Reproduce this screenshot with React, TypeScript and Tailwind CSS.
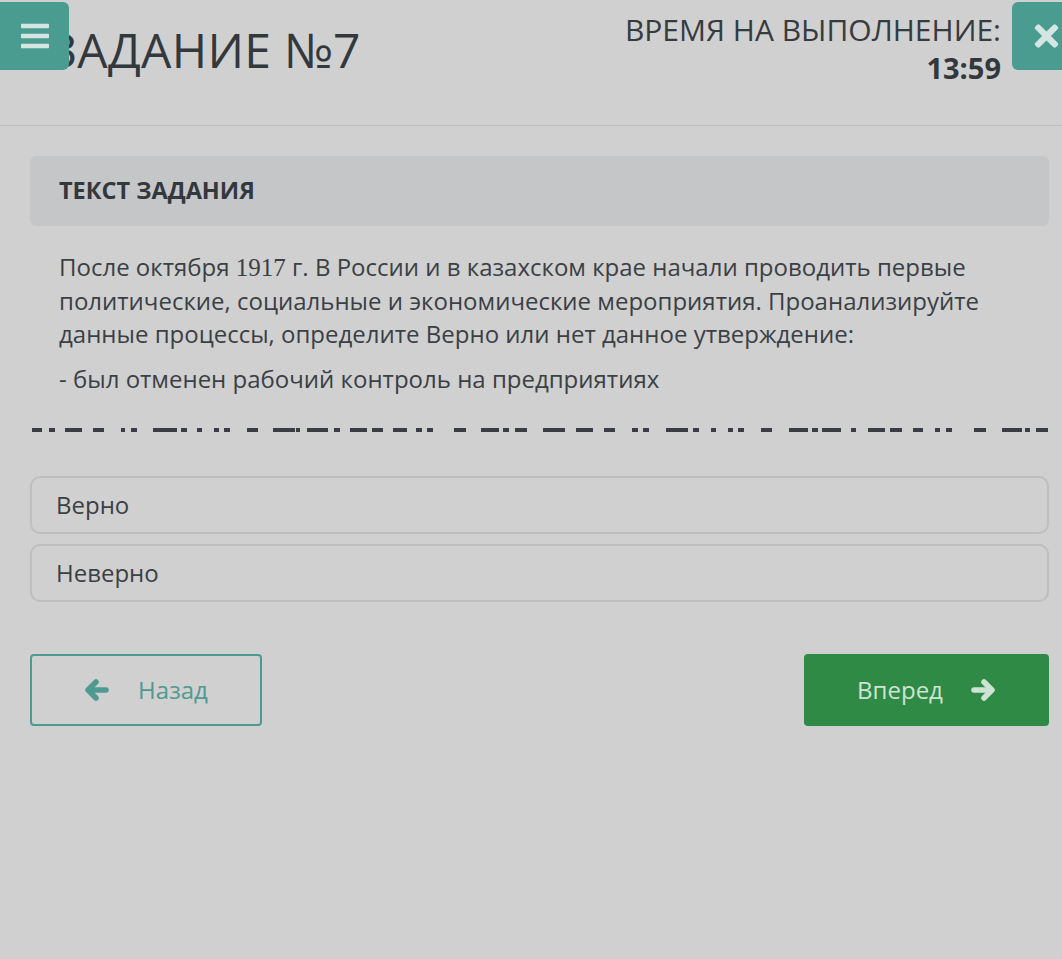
import { FaBars, FaTimes } from 'react-icons/fa'

// dashes under the question text, [x, width] in px relative to the line start (x=30)
const dashes: [number, number][] = [
  [2, 10], [19, 6], [35, 17], [63, 11], [91, 4], [101, 6], [123, 24], [151, 6], [167, 5], [184, 5],
  [194, 6], [217, 11], [243, 22], [266, 4], [277, 21], [304, 6], [320, 17], [342, 11], [363, 14],
  [386, 6], [397, 6], [424, 12], [451, 18], [473, 6], [485, 12], [513, 17], [529, 6], [546, 17],
  [574, 11], [602, 6], [613, 6], [636, 22], [663, 6], [681, 5], [698, 5], [708, 6], [731, 11],
  [759, 19], [782, 6], [792, 19], [821, 5], [838, 17], [860, 12], [883, 10], [905, 5], [916, 6],
  [944, 12], [972, 20], [995, 5], [1006, 12],
]

const options = ['Верно', 'Неверно']

function Arrow({ dir }: { dir: 'left' | 'right' }) {
  return (
    <svg
      width="26"
      height="24"
      viewBox="0 0 26 24"
      fill="none"
      stroke="currentColor"
      strokeWidth="5.5"
      strokeLinecap="round"
      strokeLinejoin="round"
      className={dir === 'right' ? 'rotate-180' : ''}
    >
      <path d="M12 4 L4 12 L12 20" />
      <path d="M5 12 H22" />
    </svg>
  )
}

export default function App() {
  return (
    <div
      className="min-h-[959px] bg-[#d0d0d0] text-[#363b40]"
      style={{ fontFamily: '"Open Sans", "Noto Sans", sans-serif' }}
    >
      {/* Header */}
      <header className="relative h-[126px] border-b border-[#bdbdbd]">
        <button className="absolute left-0 top-[2px] z-10 flex h-[68px] w-[69px] items-center justify-center rounded-r-[6px] bg-[#4a9c91] text-[#d5e6e2]">
          <FaBars size={32} />
        </button>
        <button className="absolute right-0 top-[2px] z-10 flex h-[68px] w-[50px] items-center justify-start rounded-l-[6px] bg-[#4a9c91] pl-[19px] text-[#d5e6e2]">
          <FaTimes size={34} />
        </button>

        <div className="flex items-start justify-between pl-[49px] pr-[61px]">
          <h1 className="mt-[19px] text-[48px] font-normal leading-[62px] tracking-[0.3px] text-[#33383d]">
            ЗАДАНИЕ №7
          </h1>
          <div className="mt-[11px] text-right">
            <div className="text-[30px] leading-[38px]">ВРЕМЯ НА ВЫПОЛНЕНИЕ:</div>
            <div className="text-[29px] font-bold leading-[38px] text-[#33383d]">13:59</div>
          </div>
        </div>
      </header>

      <main className="pl-[30px] pr-[13px] pt-[30px]">
        {/* Task text */}
        <div className="flex h-[70px] items-center rounded-[6px] bg-[#c5c6c8] px-[29px]">
          <h2 className="text-[23.5px] font-bold text-[#33383d]">ТЕКСТ ЗАДАНИЯ</h2>
        </div>

        <div className="px-[29px] pt-[24px] text-[24px] leading-[33px] text-[#3b4045]">
          <p>
            После октября{' '}
            <span className="text-[25px]" style={{ fontFamily: '"Liberation Serif", serif' }}>
              1917
            </span>{' '}
            г. В России и в казахском крае начали проводить первые политические, социальные и
            экономические мероприятия. Проанализируйте данные процессы, определите Верно или нет
            данное утверждение:
          </p>
          <p className="mt-[12px]">- был отменен рабочий контроль на предприятиях</p>
        </div>

        <svg className="mt-[32px] block" width="1020" height="6" viewBox="0 0 1020 6">
          {dashes.map(([x, w], i) => (
            <rect key={i} x={x} y={1} width={w} height={4} fill="#3a3e44" />
          ))}
        </svg>

        {/* Answers */}
        <div className="mt-[43px] flex flex-col gap-[10px]">
          {options.map((o) => (
            <div
              key={o}
              className="flex h-[58px] items-center rounded-[10px] border-2 border-[#bebebe] px-[24px] text-[24px] text-[#3b4045]"
            >
              {o}
            </div>
          ))}
        </div>

        {/* Navigation */}
        <div className="mt-[52px] flex items-center justify-between">
          <button className="flex h-[72px] w-[232px] items-center justify-center gap-[28px] rounded-[4px] border-2 border-[#4e9a90] text-[24px] text-[#4e9a90]">
            <Arrow dir="left" />
            <span>Назад</span>
          </button>
          <button className="flex h-[72px] w-[245px] items-center justify-center gap-[27px] rounded-[4px] bg-[#2e8a45] text-[24px] text-[#cfe3d4]">
            <span>Вперед</span>
            <Arrow dir="right" />
          </button>
        </div>
      </main>
    </div>
  )
}
